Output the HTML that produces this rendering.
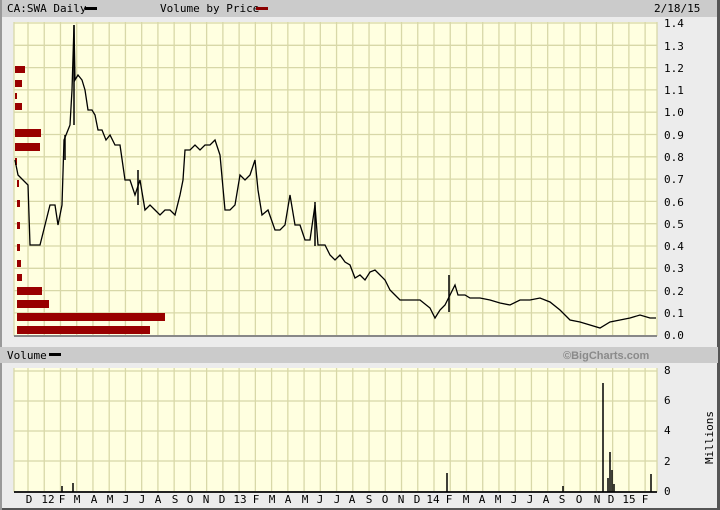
<!DOCTYPE html>
<html><head><meta charset="utf-8"><style>
body{margin:0;background:#ececec;}
svg{display:block;font-family:"DejaVu Sans Mono","Liberation Mono",monospace;}
</style></head><body>
<svg id="s" width="720" height="510" xmlns="http://www.w3.org/2000/svg">
<rect x="0" y="0" width="720" height="510" fill="#ececec"/>
<rect x="0" y="0" width="718" height="17" fill="#cbcbcb"/>
<rect x="717" y="0" width="3" height="510" fill="#555"/>
<rect x="0" y="508" width="720" height="2" fill="#555"/>
<rect x="0" y="0" width="2" height="510" fill="#999"/>
<text x="7" y="12" font-size="11" fill="#000">CA:SWA Daily</text>
<rect x="85" y="7" width="12" height="3" fill="#000"/>
<text x="160" y="12" font-size="11" fill="#000">Volume by Price</text>
<rect x="256" y="7" width="12" height="3" fill="#8b0000"/>
<text x="654" y="12" font-size="11" fill="#000">2/18/15</text>
<rect x="0" y="347" width="718" height="16" fill="#cbcbcb"/>
<text x="7" y="359" font-size="11" fill="#000">Volume</text>
<rect x="49" y="353" width="12" height="3" fill="#000"/>
<text x="563" y="359" font-size="11" font-weight="bold" fill="#8a8a8a" font-family="Liberation Sans,sans-serif">©BigCharts.com</text>
<rect x="14" y="22" width="643" height="314" fill="#ffffe0"/>
<rect x="14" y="368" width="643" height="124" fill="#ffffe0"/>
<g id="grid" stroke="#d8d8a8" stroke-width="1.3"></g>
<line x1="14" y1="336" x2="657" y2="336" stroke="#888" stroke-width="2"/>
<line x1="14" y1="492" x2="657" y2="492" stroke="#222" stroke-width="2"/>
<g id="vbp" fill="#990000">
<rect x="15" y="66" width="10" height="7"/>
<rect x="15" y="80" width="7" height="7"/>
<rect x="15" y="93" width="2" height="6"/>
<rect x="15" y="103" width="7" height="7"/>
<rect x="15" y="129" width="26" height="8"/>
<rect x="15" y="143" width="25" height="8"/>
<rect x="15" y="158" width="2" height="7"/>
<rect x="17" y="180" width="2" height="7"/>
<rect x="17" y="200" width="3" height="7"/>
<rect x="17" y="222" width="3" height="7"/>
<rect x="17" y="244" width="3" height="7"/>
<rect x="17" y="260" width="4" height="7"/>
<rect x="17" y="274" width="5" height="7"/>
<rect x="17" y="287" width="25" height="8"/>
<rect x="17" y="300" width="32" height="8"/>
<rect x="17" y="313" width="148" height="8"/>
<rect x="17" y="326" width="133" height="8"/>
</g>
<polyline fill="none" stroke="#000" stroke-width="1.3" points="15,160 18,175 28,185 30,245 40,245 45,225 50,205 55,205 58,225 62,205 64,140 68,130 70,125 72,90 74,25 75,80 78,75 82,80 85,90 88,110 92,110 95,115 98,130 102,130 106,140 110,135 115,145 120,145 125,180 130,180 135,195 140,180 145,210 150,205 155,210 160,215 165,210 170,210 175,215 180,195 183,180 185,150 190,150 195,145 200,150 205,145 210,145 215,140 220,155 225,210 230,210 235,205 240,175 245,180 250,175 255,160 258,190 262,215 268,210 275,230 280,230 285,225 290,195 295,225 300,225 305,240 310,240 315,205 318,245 325,245 330,255 335,260 340,255 345,262 350,265 355,278 360,275 365,280 370,272 375,270 380,275 385,280 390,290 395,295 400,300 410,300 420,300 430,308 435,318 440,310 445,305 450,295 455,285 458,295 465,295 470,298 480,298 490,300 500,303 510,305 520,300 530,300 540,298 550,302 560,310 570,320 580,322 590,325 600,328 610,322 620,320 630,318 640,315 650,318 656,318"/>
<g stroke="#000" stroke-width="1.5">
<line x1="74" y1="25" x2="74" y2="125"/><line x1="315" y1="202" x2="315" y2="246"/>
<line x1="65" y1="135" x2="65" y2="160"/><line x1="138" y1="170" x2="138" y2="205"/>
<line x1="449" y1="275" x2="449" y2="312"/>
<line x1="603" y1="383" x2="603" y2="492"/><line x1="610" y1="452" x2="610" y2="492"/>
<line x1="612" y1="470" x2="612" y2="492"/><line x1="608" y1="478" x2="608" y2="492"/>
<line x1="651" y1="474" x2="651" y2="492"/><line x1="563" y1="486" x2="563" y2="492"/>
<line x1="447" y1="473" x2="447" y2="492"/><line x1="73" y1="483" x2="73" y2="492"/>
<line x1="62" y1="486" x2="62" y2="492"/><line x1="614" y1="484" x2="614" y2="492"/>
</g>
<g font-size="11" fill="#000">
<text x="664" y="27">1.4</text><text x="664" y="50">1.3</text><text x="664" y="72">1.2</text>
<text x="664" y="94">1.1</text><text x="664" y="116">1.0</text><text x="664" y="139">0.9</text>
<text x="664" y="161">0.8</text><text x="664" y="183">0.7</text><text x="664" y="206">0.6</text>
<text x="664" y="228">0.5</text><text x="664" y="250">0.4</text><text x="664" y="272">0.3</text>
<text x="664" y="295">0.2</text><text x="664" y="317">0.1</text><text x="664" y="339">0.0</text>
<text x="664" y="374">8</text><text x="664" y="404">6</text><text x="664" y="434">4</text>
<text x="664" y="465">2</text><text x="664" y="495">0</text>
<text transform="translate(713,464) rotate(-90)">Millions</text>
</g>
<g id="lab" font-size="11" fill="#000" text-anchor="middle"></g>
</svg>
<script>
var g=document.getElementById('grid'),ns="http://www.w3.org/2000/svg";
function L(a,b,c,d){var l=document.createElementNS(ns,'line');l.setAttribute('x1',a);l.setAttribute('y1',b);l.setAttribute('x2',c);l.setAttribute('y2',d);g.appendChild(l);}
for(var i=0;i<=38;i++){var x=28+i*16.24;L(x,22,x,336);L(x,368,x,492);}
for(var k=0;k<14;k++){var y=23+k*22.3;L(14,y,657,y);}
[371,401,431,461].forEach(function(y){L(14,y,657,y);});
L(14,22,14,336);L(657,22,657,336);L(14,368,14,492);L(657,368,657,492);
var labs="D 12 F M A M J J A S O N D 13 F M A M J J A S O N D 14 F M A M J J A S O N D 15 F".split(" ");
var xs=[29,48,62,77,94,110,126,142,158,175,190,206,222,240,256,272,288,305,320,337,352,369,385,401,417,433,449,466,482,498,514,530,546,562,579,597,611,629,645];
var lg=document.getElementById('lab');
labs.forEach(function(t,i){var e=document.createElementNS(ns,'text');e.setAttribute('x',xs[i]);e.setAttribute('y',503);e.textContent=t;lg.appendChild(e);});
</script>
</body></html>
